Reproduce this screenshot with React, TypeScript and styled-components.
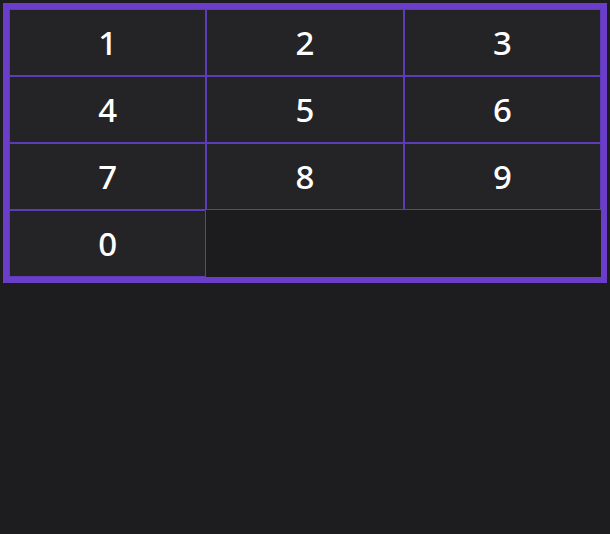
import React from 'react';
import styled, { createGlobalStyle } from 'styled-components';

const GlobalStyle = createGlobalStyle`
  html, body {
    margin: 0;
    padding: 0;
    background: #1d1d20;
    min-height: 100%;
  }
  body {
    height: 534px;
    font-family: 'Noto Sans', 'Open Sans', sans-serif;
  }
`;

const Page = styled.div`
  padding: 3px;
`;

const Keypad = styled.div`
  display: grid;
  grid-template-columns: repeat(3, 1fr);
  grid-auto-rows: 67px;
  border: 6px solid #6a3ec9;
  background: #1c1c1f;
`;

const Key = styled.button`
  display: flex;
  align-items: center;
  justify-content: center;
  margin: 0;
  padding: 0;
  border: 1px solid #5e3bb8;
  background: #242427;
  color: #ffffff;
  font-family: 'Noto Sans', 'Open Sans', sans-serif;
  font-size: 33px;
  font-weight: 500;
  line-height: 1;
  cursor: pointer;
`;

const keys = ['1', '2', '3', '4', '5', '6', '7', '8', '9', '0'];

const App: React.FC = () => {
  return (
    <>
      <GlobalStyle />
      <Page>
        <Keypad>
          {keys.map((k) => (
            <Key key={k}>{k}</Key>
          ))}
        </Keypad>
      </Page>
    </>
  );
};

export default App;
